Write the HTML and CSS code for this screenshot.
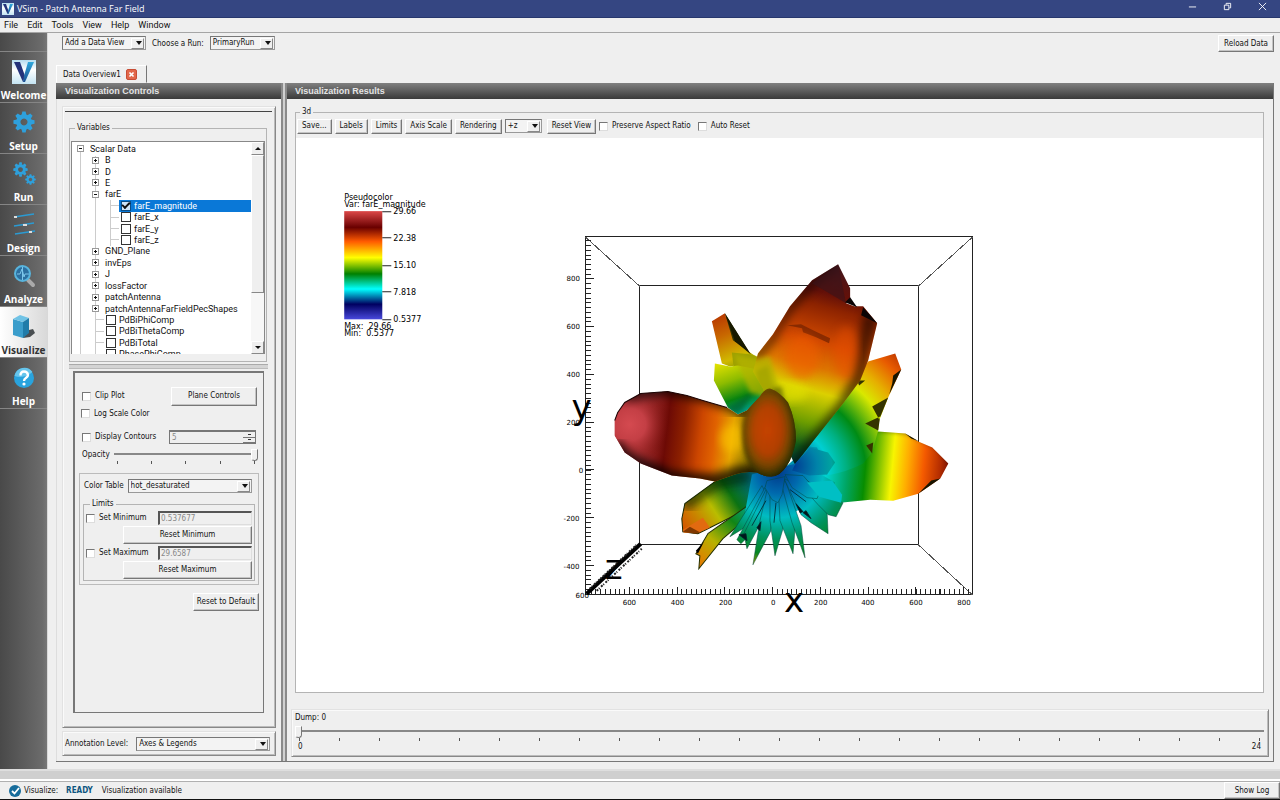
FILE: index.html
```html
<!DOCTYPE html>
<html lang="en">
<head>
<meta charset="utf-8">
<title>VSim - Patch Antenna Far Field</title>
<link rel="stylesheet" href="styles.css">
</head>
<body>
<svg width="0" height="0" class="defs" aria-hidden="true">
  <defs>
    <linearGradient id="vbg" x1="0" y1="0" x2="0" y2="1"><stop offset="0" stop-color="#b5dcef"/><stop offset=".4" stop-color="#fff"/><stop offset="1" stop-color="#c4e4f3"/></linearGradient>
    <linearGradient id="vr" x1="0" y1="0" x2="0" y2="1"><stop offset="0" stop-color="#2fa8dc"/><stop offset="1" stop-color="#1b4f93"/></linearGradient>
    <symbol id="logo" viewBox="0 0 24 24"><rect width="24" height="24" fill="url(#vbg)"/><path d="M2 2h6l5 14-2 6z" fill="#24327a"/><path d="M16 2h6l-9 20h-2l1-6z" fill="url(#vr)"/></symbol>
    <symbol id="gear" viewBox="-12 -12 24 24"><g fill="#2ea0dc"><path fill-rule="evenodd" d="M0-8.500a8.500 8.500 0 1 0 .01 0zM0-3.800a3.800 3.800 0 1 1-.01 0z"/><g><path id="tooth" d="M-2.700-7.500-1.800-11.500h3.600l.9 4zM-2.700 7.500-1.800 11.500h3.600l.9-4z"/><use href="#tooth" transform="rotate(45)"/><use href="#tooth" transform="rotate(90)"/><use href="#tooth" transform="rotate(135)"/></g></g></symbol>
  </defs>
</svg>
<div class="app">
  <header class="titlebar">
    <svg class="title-logo"><use href="#logo"/></svg>
    <h1>VSim - Patch Antenna Far Field</h1>
    <div class="winbtns">
      <button aria-label="Minimize"><svg viewBox="0 0 10 10"><path d="M1 5.500h8"/></svg></button>
      <button aria-label="Restore"><svg viewBox="0 0 10 10"><path d="M1.500 3.500h5v5h-5zM3.500 3V1.500h5v5H7"/></svg></button>
      <button aria-label="Close"><svg viewBox="0 0 10 10"><path d="M1 1l8 8M9 1l-8 8"/></svg></button>
    </div>
  </header>
  <nav class="menubar"><button>File</button><button>Edit</button><button>Tools</button><button>View</button><button>Help</button><button>Window</button></nav>

  <div class="body">
    <nav class="sidebar">
      <a href="#welcome"><svg viewBox="0 0 24 24"><use href="#logo"/></svg>Welcome</a>
      <a href="#setup"><svg viewBox="0 0 24 24"><use href="#gear" x="1" y="0" width="22" height="22"/></svg>Setup</a>
      <a href="#run"><svg viewBox="0 0 24 24"><use href="#gear" x="1" y="0" width="15" height="15"/><use href="#gear" x="13" y="12" width="11" height="11"/></svg>Run</a>
      <a href="#design"><svg viewBox="0 0 24 24"><path d="M2 4l20-3M2 13l20-3M3 21l20-3" stroke="#2b9bd3" stroke-width="1.500"/><path d="M2 4h3M11 12h4M17 19h3" stroke="#ddd" stroke-width="2"/></svg>Design</a>
      <a href="#analyze"><svg viewBox="0 0 24 24"><path d="M16 16l5 5" stroke="#aaa" stroke-width="4" stroke-linecap="round"/><circle cx="10.500" cy="9.500" r="7.500" fill="#2c6fa0" stroke="#58b4dd" stroke-width="2"/><path d="M5 10h3l2-5 2 8 1-3h4M10.500 3v13" stroke="#7cc6ea" fill="none"/></svg>Analyze</a>
      <a href="#visualize" class="active"><svg viewBox="0 0 24 24"><path d="M13 16l8-2 2 4-5 4-7 1z" fill="#4a4f52"/><path d="M1 4l10 3v16L1 20z" fill="#3b9dcb"/><path d="M1 4l7-4 9 3-6 4z" fill="#70c3e6"/><path d="M11 7l6-4v15l-6 5z" fill="#217ca9"/></svg>Visualize</a>
      <a href="#help"><svg viewBox="0 0 24 24"><circle cx="12" cy="12" r="10" fill="#29a3dd"/><path d="M2.500 10a10 10 0 0 1 18-4q-8 7-18 4z" fill="#66c5ec"/><path d="M8.500 9.500q0-4 3.500-4t4 3.500c0 3-4 2.500-4 6" fill="none" stroke="#fff" stroke-width="2.400"/><circle cx="12" cy="18" r="1.600" fill="#fff"/></svg>Help</a>
      <span class="rest"></span>
    </nav>

    <main class="main">
      <div class="toolbar">
        <span class="combo dataview"><select aria-label="Add a Data View"><option>Add a Data View</option></select></span>
        <label for="run">Choose a Run:</label>
        <span class="combo run"><select id="run"><option>PrimaryRun</option></select></span>
        <button class="btn reload">Reload Data</button>
      </div>
      <div class="tabs"><div class="tab">Data Overview1<button aria-label="Close tab"><svg viewBox="0 0 11 11"><path d="M3 3l5 5M8 3L3 8"/></svg></button></div></div>

      <div class="pane">
        <section class="controls">
          <h2>Visualization Controls</h2>
          <div class="frame control-frame">
            <hr>
            <fieldset class="variables"><legend>Variables</legend>
              <div class="tree-wrap">
                <ul class="tree">
                  <li class="l0"><i class="tg minus"></i>Scalar Data</li>
                  <li class="l1"><i class="tg"></i>B</li>
                  <li class="l1"><i class="tg"></i>D</li>
                  <li class="l1"><i class="tg"></i>E</li>
                  <li class="l1"><i class="tg minus"></i>farE</li>
                  <li class="l2 sel"><label><input type="checkbox" checked><span>farE_magnitude</span></label></li>
                  <li class="l2"><label><input type="checkbox"><span>farE_x</span></label></li>
                  <li class="l2"><label><input type="checkbox"><span>farE_y</span></label></li>
                  <li class="l2"><label><input type="checkbox"><span>farE_z</span></label></li>
                  <li class="l1"><i class="tg"></i>GND_Plane</li>
                  <li class="l1"><i class="tg"></i>invEps</li>
                  <li class="l1"><i class="tg"></i>J</li>
                  <li class="l1"><i class="tg"></i>lossFactor</li>
                  <li class="l1"><i class="tg"></i>patchAntenna</li>
                  <li class="l1"><i class="tg"></i>patchAntennaFarFieldPecShapes</li>
                  <li class="lc"><label><input type="checkbox"><span>PdBiPhiComp</span></label></li>
                  <li class="lc"><label><input type="checkbox"><span>PdBiThetaComp</span></label></li>
                  <li class="lc"><label><input type="checkbox"><span>PdBiTotal</span></label></li>
                  <li class="lc"><label><input type="checkbox"><span>PhasePhiComp</span></label></li>
                </ul>
                <div class="scroll"><button aria-label="Scroll up" class="up"></button><div class="thumb"></div><div class="trough"></div><button aria-label="Scroll down" class="down"></button></div>
              </div>
            </fieldset>
            <div class="hsplit"></div>
            <div class="plot-opts">
              <div class="row r1"><label class="chk"><input type="checkbox">Clip Plot</label><button class="btn wide">Plane Controls</button></div>
              <div class="row r2"><label class="chk"><input type="checkbox">Log Scale Color</label></div>
              <div class="row r3"><label class="chk"><input type="checkbox">Display Contours</label><span class="spin"><input type="text" value="5" aria-label="Contours" disabled><span><button aria-label="Increase" class="inc"></button><button aria-label="Decrease" class="dec"></button></span></span></div>
              <div class="row r4"><label for="op">Opacity</label><div class="slide"><input id="op" type="range" value="100"><div class="ticks"><i></i><i></i><i></i><i></i><i></i></div></div></div>
              <div class="colorbox">
                <div class="row r5"><label for="ct">Color Table</label><span class="combo"><select id="ct"><option>hot_desaturated</option></select></span></div>
                <fieldset class="limits"><legend>Limits</legend>
                  <div class="row"><label class="chk"><input type="checkbox">Set Minimum</label><input class="field" type="text" value="0.537677" aria-label="Minimum" disabled></div>
                  <button class="btn lim">Reset Minimum</button>
                  <div class="row"><label class="chk"><input type="checkbox">Set Maximum</label><input class="field" type="text" value="29.6587" aria-label="Maximum" disabled></div>
                  <button class="btn lim">Reset Maximum</button>
                </fieldset>
              </div>
              <button class="btn reset">Reset to Default</button>
            </div>
          </div>
          <div class="frame annot"><label for="an">Annotation Level:</label><span class="combo"><select id="an"><option>Axes &amp; Legends</option></select></span></div>
        </section>
        <div class="vsplit"></div>
        <section class="results">
          <h2>Visualization Results</h2>
          <fieldset class="view"><legend>3d</legend>
            <div class="viewbar">
              <button class="btn">Save...</button><button class="btn">Labels</button><button class="btn">Limits</button><button class="btn">Axis Scale</button><button class="btn">Rendering</button>
              <span class="combo axis"><select aria-label="View axis"><option>+z</option></select></span>
              <button class="btn">Reset View</button>
              <label class="chk"><input type="checkbox">Preserve Aspect Ratio</label><label class="chk"><input type="checkbox">Auto Reset</label>
            </div>
            <div class="canvas">
<svg viewBox="297 138 965 553" preserveAspectRatio="xMidYMid meet" role="img" aria-label="Far field plot">
  <defs>
    <linearGradient id="cmap" x1="0" y1="0" x2="0" y2="1"><stop offset="0" stop-color="#dc4848"/><stop offset=".15" stop-color="#690000"/><stop offset=".28" stop-color="#ff5a00"/><stop offset=".43" stop-color="#ff0"/><stop offset=".58" stop-color="#008000"/><stop offset=".72" stop-color="#0ff"/><stop offset=".86" stop-color="#000060"/><stop offset="1" stop-color="#4848dc"/></linearGradient>
    <linearGradient id="gA" gradientUnits="userSpaceOnUse" x1="620" y1="424" x2="795" y2="446"><stop offset="0" stop-color="#c04046"/><stop offset=".12" stop-color="#b93a3e"/><stop offset=".27" stop-color="#6d0a05"/><stop offset=".36" stop-color="#8c2000"/><stop offset=".46" stop-color="#cc4600"/><stop offset=".54" stop-color="#e06200"/><stop offset=".64" stop-color="#e6a400"/><stop offset=".72" stop-color="#a58400"/><stop offset=".85" stop-color="#704a00"/><stop offset="1" stop-color="#203000"/></linearGradient>
    <radialGradient id="gTip" gradientUnits="userSpaceOnUse" cx="630" cy="424" r="40"><stop offset="0" stop-color="#d44a50"/><stop offset=".4" stop-color="#c43f45"/><stop offset="1" stop-color="#6d0a05" stop-opacity="0"/></radialGradient>
    <radialGradient id="gO" gradientUnits="userSpaceOnUse" cx="768" cy="430" r="46" gradientTransform="translate(768 430) scale(.6 1) translate(-768 -430)"><stop offset="0" stop-color="#cc4200"/><stop offset=".5" stop-color="#b84000"/><stop offset=".78" stop-color="#7a4600"/><stop offset="1" stop-color="#2b3000"/></radialGradient>
    <linearGradient id="gD" gradientUnits="userSpaceOnUse" x1="842" y1="270" x2="790" y2="463"><stop offset="0" stop-color="#48151a"/><stop offset=".13" stop-color="#641008"/><stop offset=".2" stop-color="#8d2300"/><stop offset=".38" stop-color="#d34b00"/><stop offset=".5" stop-color="#dd7500"/><stop offset=".62" stop-color="#dcd000"/><stop offset=".78" stop-color="#6d9d00"/><stop offset=".9" stop-color="#135f1a"/><stop offset="1" stop-color="#003c3c"/></linearGradient>
    <linearGradient id="gB" x1="0" y1="0" x2=".35" y2="1"><stop offset="0" stop-color="#b52f00"/><stop offset=".4" stop-color="#c86800"/><stop offset=".8" stop-color="#d0b900"/><stop offset="1" stop-color="#8c9b00"/></linearGradient>
    <linearGradient id="gC" x1="0" y1="0" x2=".35" y2="1"><stop offset="0" stop-color="#e9e400"/><stop offset=".4" stop-color="#8ebc00"/><stop offset=".75" stop-color="#088510"/><stop offset="1" stop-color="#009c83"/></linearGradient>
    <radialGradient id="gE" gradientUnits="userSpaceOnUse" cx="788" cy="470" r="162"><stop offset="0" stop-color="#004a88"/><stop offset=".13" stop-color="#0074a6"/><stop offset=".25" stop-color="#00cfd2"/><stop offset=".36" stop-color="#00b080"/><stop offset=".48" stop-color="#008b14"/><stop offset=".66" stop-color="#d9e800"/><stop offset=".77" stop-color="#e6ae00"/><stop offset=".9" stop-color="#e85b00"/><stop offset="1" stop-color="#b93400"/></radialGradient>
    <linearGradient id="gF" gradientUnits="userSpaceOnUse" x1="800" y1="462" x2="948" y2="476"><stop offset="0" stop-color="#0080a0"/><stop offset=".18" stop-color="#00d4d0"/><stop offset=".32" stop-color="#00a665"/><stop offset=".44" stop-color="#078d00"/><stop offset=".62" stop-color="#f7f500"/><stop offset=".72" stop-color="#ffad00"/><stop offset=".83" stop-color="#f45a00"/><stop offset=".94" stop-color="#b42d00"/><stop offset="1" stop-color="#7b1100"/></linearGradient>
    <linearGradient id="gG" gradientUnits="userSpaceOnUse" x1="686" y1="532" x2="765" y2="480"><stop offset="0" stop-color="#d45500"/><stop offset=".2" stop-color="#c88700"/><stop offset=".38" stop-color="#b9bd00"/><stop offset=".62" stop-color="#0b7213"/><stop offset=".85" stop-color="#006d75"/><stop offset="1" stop-color="#005b8c"/></linearGradient>
    <linearGradient id="gH" gradientUnits="userSpaceOnUse" x1="698" y1="562" x2="768" y2="480"><stop offset="0" stop-color="#e37a00"/><stop offset=".25" stop-color="#b6b200"/><stop offset=".5" stop-color="#118515"/><stop offset=".75" stop-color="#00a8a3"/><stop offset="1" stop-color="#0050a2"/></linearGradient>
    <radialGradient id="gP" gradientUnits="userSpaceOnUse" cx="778" cy="472" r="94"><stop offset="0" stop-color="#003a8b"/><stop offset=".22" stop-color="#0069ad"/><stop offset=".48" stop-color="#00bcc1"/><stop offset=".7" stop-color="#00935f"/><stop offset=".88" stop-color="#078622"/><stop offset="1" stop-color="#9c9b00"/></radialGradient>
    <radialGradient id="gK" gradientUnits="userSpaceOnUse" cx="793" cy="465" r="48"><stop offset="0" stop-color="#003a92"/><stop offset=".5" stop-color="#0083a9"/><stop offset=".8" stop-color="#00a3a0"/><stop offset="1" stop-color="#009063"/></radialGradient>
    <filter id="b3" x="-20%" y="-20%" width="140%" height="140%"><feGaussianBlur stdDeviation="4"/></filter>
    <filter id="b1" x="-20%" y="-20%" width="140%" height="140%"><feGaussianBlur stdDeviation="2"/></filter>
    <path id="pA" d="M641 393L668 391 687 395 703 400 727 407 738 414 747 410 760 396Q765 388 770 388Q779 391 788 402Q796 420 796 440Q793 456 787 465Q780 476 771 476Q764 476 757 472Q745 470 735 474L715 481 700 478 672 475 641 463 625 452 615 435V420L618 412 625 402z"/>
    <clipPath id="cA"><use href="#pA"/></clipPath>
    <path id="pD" d="M838 264l12 24v10l-4 5 8 3h9l14 17-9 37-8 20-17 23-31 39-17 22-20-40-12-36-10-17 5-18 15-19 17-28 22-26z"/>
    <clipPath id="cD"><use href="#pD"/></clipPath>
    <path id="pF" d="M878 431l27 2 13 8 14 6 16 16-8 15-22 15-25 7-23-1-20 2-10 1-27-8-10-24 60-30z"/>
    <clipPath id="cF"><use href="#pF"/></clipPath>
    <path id="pG" d="M715 481L685 503 682 518 683 531 698 533 710 527 740 512 772 486 765 470 735 470z"/>
    <clipPath id="cG"><use href="#pG"/></clipPath>
  </defs>
  <g fill="none" stroke="#222" stroke-width="1" shape-rendering="crispEdges">
    <path d="M586 236.500h386v357h-386zM640 285.500h278v258h-278z"/>
    <path d="M586 237l54 49M972 237l-54 49M972 594l-54-50" stroke="#555"/>
    <path d="M588.500 240v354" stroke-width="5" stroke-dasharray="1 3.770"/>
    <path d="M590 278v300" stroke-width="8" stroke-dasharray="1 46.700"/>
    <path d="M591 591h381" stroke-width="5" stroke-dasharray="1 3.770"/>
    <path d="M629 590h340" stroke-width="8" stroke-dasharray="1 46.700"/>
  </g>
  <path d="M587 593l54-50" stroke="#000" stroke-width="4"/>
  <path d="M590 588l48-45M597 590l45-42" stroke="#222" stroke-width="2" stroke-dasharray="2 1 1 2"/>
  <g class="axis-num"><text x="567" y="281">800</text><text x="567" y="329">600</text><text x="567" y="377">400</text><text x="567" y="424">200</text><text x="579" y="472">0</text><text x="564" y="520">-200</text><text x="564" y="568">-400</text><text x="576" y="597">600</text>
  <text x="623" y="604">600</text><text x="671" y="604">400</text><text x="719" y="604">200</text><text x="771" y="604">0</text><text x="814" y="604">200</text><text x="861" y="604">400</text><text x="909" y="604">600</text><text x="957" y="604">800</text></g>
  <g class="axis-name"><text x="572" y="418">y</text><text x="784" y="611">x</text><text x="605" y="578">z</text></g>

  <path d="M725 313l25 40 7 4 10-4 18 40-28 20-20-30z" fill="#343500"/>
  <path d="M712 321l13-8 8 27 20 14 10 5-10 14-18-8-5 1-8-3z" fill="url(#gB)"/>
  <path d="M725 313l10 28 16 13z" fill="#171900"/>
  <path d="M732 352l20 2 5 3 15-1 20 65h-34l-16-22-8-30z" fill="#9da000"/>
  <path d="M715 363l15 3 8-1 20 4 8 22-19 19-9 4-10-7-14-27z" fill="url(#gC)"/>
  <path d="M755 390l-13 20-6 4-9-7z" fill="#005a2a" opacity=".6" filter="url(#b1)"/>
  <use href="#pF" fill="url(#gF)"/>
  <g clip-path="url(#cF)"><path d="M870 426l38 4 30 15 16 18" fill="none" stroke="#000" stroke-width="7" opacity=".45" filter="url(#b1)"/></g>
  <path d="M868 361l27-8 6 16-13 28-9 23-1 10-6 22-9 11q-15 8-36 12l-30-22 28-40 35-40z" fill="url(#gE)"/>
  <path d="M901 369l-8 6-1 8-3 11zM905 433l14 8-8-3zM918 493l13-13 9-2z" fill="#171500"/>
  <path d="M888 397l-16 9 7 13zM857 380h8l-6 5zM865 423l15-7-2 14zM866 445l7-3-1 11z" fill="#343300"/>
  <path d="M817 447q8 18-16 28l-16-8 23-21z" fill="#0095af"/>

  <use href="#pD" fill="url(#gD)"/>
  <g clip-path="url(#cD)">
    <path d="M870 315l-12 65-18 30-33 40-15 20" fill="none" stroke="#000" stroke-width="14" opacity=".55" filter="url(#b3)"/>
    <path d="M836 264l-25 20-22 25-17 30-18 20" fill="none" stroke="#000" stroke-width="9" opacity=".45" filter="url(#b3)"/>
    <path d="M812 283l34 20-8-38z" fill="#38141a" opacity=".6"/>
    <path d="M787 325l14-1 14 7 15 7-1 5-13-6-13-5-1-4z" fill="#7a2600" opacity=".8"/>
    <ellipse cx="802" cy="357" rx="17" ry="22" fill="#f25b00" opacity=".55" filter="url(#b3)"/>
    <ellipse cx="846" cy="352" rx="12" ry="26" fill="#e94f00" opacity=".5" filter="url(#b3)"/>
    <ellipse cx="790" cy="392" rx="18" ry="10" fill="#e5e400" opacity=".6" filter="url(#b3)"/>
    <path d="M756 370l12-5 5 20 9 2 4 22 6 8 4 18-8 10-30-40z" fill="#686c00" opacity=".75" filter="url(#b1)"/>
  </g>
  <path d="M863 307l14 16-16-8zM850 297l-5 5 12 5z" fill="#0b0505"/>
  <path d="M734 354l22 5 14-3 8 28-14 12-14-4z" fill="#b4b400" opacity=".75" filter="url(#b1)"/>

  <use href="#pG" fill="url(#gG)" stroke="#1a2800"/>
  <g clip-path="url(#cG)"><path d="M750 474l-35 7-32 23" fill="none" stroke="#001c00" stroke-width="16" opacity=".6" filter="url(#b3)"/></g>
  <path d="M683 529l20-12 7 10-12 5-14 0z" fill="#e26a10"/><path d="M683 531l7-5 11 6-6 1z" fill="#803800"/>
  <path d="M708 533l-10 17-2 3 4 2-1 13 24-30 20-17 26-31z" fill="url(#gH)" stroke="#233000"/>
  <path d="M696 550l8-9-6 12z"/>
  <path d="M752 474L800 462 835 482 828 500 805 504 792 514 780 512 770 518 757 514 745 512z" fill="url(#gP)"/>
  <g fill="url(#gP)" stroke="#00493f" stroke-width=".5">
    <path d="M762 485l-32 51 13-8 24-33z"/><path d="M766 485l-29 54 4 4 9-9 19-43z"/><path d="M768 485l-24 48 3 15 15-28 10-35z"/>
    <path d="M768 486l-8 34-7 44 18-34 2-48z"/><path d="M770 480v40l5 35 8-27-3-48z"/><path d="M778 482l2 38 13 33 2-25-10-49z"/>
    <path d="M782 486l10 36 13 35-4-32-16-46z"/><path d="M784 478l17 36 10 8 17 11-1-22-21-23z"/><path d="M800 484l18 20 10 10 8 2 7-14-9-4-30-20z"/>
    <path d="M785 474l18 1 16 18-2 5-10-1-15-10z"/><path d="M767 480l18-4-3 18-4 8-6-3-7-12z"/>
  </g>
  <path d="M807 482l25-2 10 14-1 8-22-6z" fill="#00bfc4"/>
  <path d="M796 462l14-15 18 5 7 10-8 12-18 1-17-5z" fill="url(#gK)"/>
  <path d="M796 503l4 9 3-1zM811 518l-5-8-3 2zM739 534l8 6-1-7zM757 527l4-6-1 9zM790 489l16 12M766 500l-14 25M776 502l-2 20" fill="#00171a" stroke="#00202b" stroke-width=".8"/>

  <use href="#pA" fill="url(#gA)"/>
  <g clip-path="url(#cA)">
    <path d="M612 384h60v96h-60z" fill="url(#gTip)"/>
    <path d="M625 394l43-6 35 7 26 8 13 8 15-15" fill="none" stroke="#000" stroke-width="14" opacity=".65" filter="url(#b3)"/>
    <path d="M612 446l12 14 46 20 45 3 25-8 50-4" fill="none" stroke="#000" stroke-width="20" opacity=".75" filter="url(#b3)"/>
    <ellipse cx="733" cy="438" rx="13" ry="14" fill="#ffc800" opacity=".6" filter="url(#b3)"/>
    <ellipse cx="769" cy="433" rx="27" ry="45" fill="url(#gO)" opacity=".93" filter="url(#b1)"/>
  </g>
  <path d="M615 420l3-8 7-10 16-9 27-2 19 4 16 5 24 7" fill="none" stroke="#1c0505"/>

  <rect x="345" y="211" width="38" height="108" fill="url(#cmap)"/>
  <path d="M383 211.500h9M383 237.500h9M383 265.500h9M383 291.500h9M383 319.500h9" stroke="#222"/>
  <g class="legend"><text x="345" y="200">Pseudocolor</text><text x="345" y="207">Var: farE_magnitude</text><text x="394" y="214">29.66</text><text x="394" y="241">22.38</text><text x="394" y="268">15.10</text><text x="394" y="295">7.818</text><text x="394" y="322">0.5377</text><text x="345" y="329">Max:&#160; 29.66</text><text x="345" y="336">Min:&#160; 0.5377</text></g>
</svg>
            </div>
          </fieldset>
          <div class="frame dump"><label for="dump">Dump: 0</label>
            <input id="dump" type="range" min="0" max="24" value="0">
            <div class="ticks"><i></i><i></i><i></i><i></i><i></i><i></i><i></i><i></i><i></i><i></i><i></i><i></i><i></i><i></i><i></i><i></i><i></i><i></i><i></i><i></i><i></i><i></i><i></i><i></i><i></i></div>
            <div class="ends"><span>0</span><span>24</span></div>
          </div>
        </section>
      </div>
    </main>
  </div>
  <div class="band"></div>
  <footer class="status"><svg viewBox="0 0 12 12"><circle cx="6" cy="6" r="6" fill="#176c9b"/><path d="M3 6l2.500 2.500L10 3" fill="none" stroke="#fff" stroke-width="1.800"/></svg><span>Visualize:</span><b>READY</b><span>Visualization available</span><button class="btn">Show Log</button></footer>
</div>
</body>
</html>
```
FILE: styles.css
```css
* { box-sizing: border-box; }
body { margin: 0; background: #efefef; color: #111; font: 8px/12px "DejaVu Sans Condensed", "DejaVu Sans", sans-serif; }
.defs { position: absolute; }
button, input, select { font: inherit; color: inherit; margin: 0; padding: 0; border: 0; border-radius: 0; background: none; }
fieldset { margin: 0; padding: 0; border: 1px solid #b4b4b4; min-width: 0; }
legend { margin-left: 4px; padding: 0 2px; line-height: 10px; }
.app { display: flex; flex-direction: column; height: 100vh; overflow: hidden; }

.titlebar { display: flex; align-items: center; height: 18px; padding-left: 2px; flex: none; background: #354682; border-bottom: 1px solid #27376d; color: #fff; }
.title-logo { width: 12px; height: 12px; }
.titlebar h1 { margin: 0 0 0 3px; font: 9px/14px "Open Sans", "Noto Sans", sans-serif; }
.winbtns { display: flex; margin-left: auto; }
.winbtns button { width: 35px; height: 16px; }
.winbtns svg { width: 9px; height: 9px; fill: none; stroke: #fff; }
.menubar { display: flex; flex: none; gap: 9px; height: 15px; padding: 0 4px; border-bottom: 1px solid #a5a5a5; font: 9px/14px Roboto, sans-serif; }

.body { display: flex; flex: 1; min-height: 0; }
.sidebar { width: 48px; flex: none; padding-top: 18px; background: linear-gradient(90deg, #494949, #6b6b6b 90%, #777); border-right: 1px solid #d8d8d8; }
.sidebar a { display: flex; flex-direction: column; align-items: center; height: 51px; padding-top: 8px; gap: 5px; border-top: 1px solid #858585; color: #fff; font: bold 10px/12px "Open Sans", "Noto Sans", sans-serif; text-decoration: none; }
.sidebar svg { width: 24px; height: 24px; flex: none; }
.sidebar a.active { color: #333; background: linear-gradient(90deg, #fff, #d9d9d9); }
.rest { display: block; border-top: 1px solid #858585; }
.main { flex: 1; min-width: 0; display: flex; flex-direction: column; padding: 0 6px 7px 8px; }

.btn { height: 15px; padding: 0 4px; background: #efefef; border: 1px solid; border-color: #fff #777 #777 #fff; box-shadow: inset -1px -1px #c4c4c4; line-height: 12px; white-space: nowrap; }
.combo { position: relative; display: inline-flex; height: 14px; border: 1px solid; border-color: #777 #999 #999 #777; background: #f3f3f3; }
.combo select { width: 100%; appearance: none; padding-left: 2px; line-height: 12px; }
.combo::before { content: ""; position: absolute; right: 1px; top: 1px; bottom: 0; width: 11px; border: 1px solid; border-color: #fff #888 #888 #fff; background: #efefef; pointer-events: none; }
.combo::after { content: ""; position: absolute; right: 3px; top: 4px; border: 3px solid transparent; border-top: 4px solid #111; border-bottom: 0; pointer-events: none; }
.chk { display: inline-flex; align-items: center; gap: 4px; white-space: nowrap; }
input[type=checkbox] { appearance: none; width: 9px; height: 9px; flex: none; background: #fff; border: 1px solid; border-color: #777 #ddd #ddd #777; }
input[type=range] { appearance: none; display: block; width: 100%; height: 12px; background: linear-gradient(#888, #888) 0 4px / 100% 2px no-repeat; }
input[type=range]::-webkit-slider-thumb { appearance: none; width: 7px; height: 12px; border-radius: 0 0 4px 4px; border: 1px solid; border-color: #fff #777 #777 #fff; background: #efefef; }
.ticks { display: flex; justify-content: space-between; }
.ticks i { width: 1px; height: 3px; background: #555; }
.frame { border: 1px solid; border-color: #e2e2e2 #888 #888 #e2e2e2; box-shadow: inset 1px 1px #fafafa, inset -1px -1px #bbb; }

.toolbar { display: flex; flex: none; align-items: flex-start; height: 32px; padding: 3px 0 0 6px; gap: 6px; }
.toolbar label { line-height: 15px; }
.toolbar .dataview { width: 84px; }
.toolbar .run { width: 65px; }
.reload { margin-left: auto; margin-top: -1px; height: 17px; padding: 0 5px; }
.tabs { display: flex; flex: none; height: 18px; }
.tab { display: flex; align-items: center; gap: 5px; width: 91px; padding: 1px 0 0 6px; border: 1px solid; border-color: #fff #777 transparent #fff; white-space: nowrap; }
.tab button { width: 11px; height: 11px; background: #e2674a; border: 1px solid #c84d35; border-radius: 2px; display: flex; }
.tab svg { width: 9px; height: 9px; stroke: #fff; stroke-width: 2; }
.pane { display: flex; flex: 1; min-height: 0; border-right: 1px solid #777; border-bottom: 1px solid #777; }
h2 { margin: 0; height: 16px; flex: none; padding-left: 9px; background: linear-gradient(#808080, #3a3a3a); color: #e4e4e4; font: bold 9px/16px "Liberation Sans", Arial, sans-serif; }
.controls { width: 225px; flex: none; display: flex; flex-direction: column; border-left: 1px solid #ddd; }
.controls h2 { margin-left: -1px; }
.vsplit { width: 6px; flex: none; background: #d0d0d0; border-left: 2px solid #8a8a8a; border-right: 2px solid #8a8a8a; }
.results { flex: 1; min-width: 0; display: flex; flex-direction: column; padding-bottom: 4px; }
.results h2 { padding-left: 8px; }

.control-frame { flex: 1; min-height: 0; display: flex; flex-direction: column; margin: 7px 5px 0 5px; padding: 0 3px 14px 2px; }
hr { width: 100%; height: 1px; margin: 4px 0 0; border: 0; background: #444; flex: none; }
.variables { flex: none; margin: 11px 5px 0 4px; padding: 8px 1px 7px; }
.tree-wrap { display: flex; height: 213px; overflow: hidden; border: 1px solid #888; border-bottom: 0; background: #fff; }
.tree { flex: 1; min-width: 0; height: 218px; margin: 0; padding: 1px 0 0; list-style: none; display: grid; grid-auto-rows: 1fr; font: 9px/10px Roboto, sans-serif; background: linear-gradient(#ccc, #ccc) 8px 10px / 1px 100% no-repeat, linear-gradient(#ccc, #ccc) 23px 14px / 1px 100% no-repeat; }
.tree li { display: flex; align-items: center; min-height: 0; line-height: 10px; white-space: nowrap; }
.tree label { display: flex; align-items: center; gap: 3px; flex: 1; height: 100%; }
.tree input { width: 10px; height: 10px; border: 1px solid #333; }
.l0 { padding-left: 5px; }
.l1 { padding-left: 20px; }
.l2 { padding-left: 49px; background: linear-gradient(#ccc, #ccc) 38px 5px / 9px 1px no-repeat, linear-gradient(#ccc, #ccc) 38px 0 / 1px 100% no-repeat; }
.lc { padding-left: 34px; background: linear-gradient(#ccc, #ccc) 24px 5px / 8px 1px no-repeat; }
.tree .sel label { background: #0a78d7; color: #fff; padding-left: 2px; }
.tree .sel { padding-left: 47px; }
.tree .sel input { display: grid; place-items: center; background: #cfe5f8; border-color: #0a4d86; }
.tree .sel input::before { content: ""; width: 6px; height: 3px; margin-top: -2px; border-left: 2px solid #111; border-bottom: 2px solid #111; transform: rotate(-45deg); }
.tg { position: relative; width: 7px; height: 7px; margin-right: 6px; flex: none; border: 1px solid #999; background: #fff; }
.tg::before { content: ""; position: absolute; left: 1px; top: 2px; width: 3px; height: 1px; background: #111; }
.tg::after { content: ""; position: absolute; left: 2px; top: 1px; width: 1px; height: 3px; background: #111; }
.minus::after { display: none; }
.scroll { width: 13px; display: flex; flex-direction: column; background: #f7f7f7; }
.scroll button, .thumb { border: 1px solid; border-color: #fff #888 #888 #fff; background: #efefef; }
.scroll button { height: 13px; flex: none; display: grid; place-items: center; }
.thumb { height: 138px; }
.trough { flex: 1; }
.up::before { content: ""; border: 3px solid transparent; border-top: 0; border-bottom: 3px solid #111; }
.down::before { content: ""; border: 3px solid transparent; border-bottom: 0; border-top: 3px solid #111; }
.hsplit { height: 5px; flex: none; margin: 2px 4px 0; background: #d4d4d4; border-top: 1px solid #aaa; border-bottom: 1px solid #bbb; }
.plot-opts { flex: 1; min-height: 0; display: flex; flex-direction: column; margin: 2px 8px 0 8px; border: 1px solid #777; border-top-width: 2px; border-left-width: 2px; }
.row { display: flex; align-items: center; }
.r1 { margin-top: 13px; padding: 0 6px 0 7px; height: 20px; justify-content: space-between; }
.wide { width: 86px; height: 19px; }
.r2 { height: 15px; padding-left: 6px; }
.r3 { height: 16px; margin-top: 8px; padding: 0 7px; justify-content: space-between; }
.spin { display: flex; width: 87px; height: 14px; border: 1px solid #777; border-top-width: 2px; }
.spin input { flex: 1; min-width: 0; padding-left: 2px; color: #888; }
.spin > span { display: flex; flex-direction: column; width: 12px; }
.spin button { flex: 1; min-height: 0; border-bottom: 1px solid #777; display: grid; place-items: center; }
.spin button::before { content: ""; width: 3px; height: 1px; background: #333; }
.r4 { align-items: flex-start; gap: 4px; padding: 4px 5px 0 7px; height: 25px; }
.r4 .slide { flex: 1; min-width: 0; }
.r4 .ticks { padding: 0 3px; }
.colorbox { margin: 3px 4px 0; border: 1px solid #bbb; padding: 5px 3px 3px; }
.r5 { gap: 4px; padding: 0 3px 0 1px; }
.r5 .combo { flex: 1; }
.limits { margin-top: 6px; padding: 0 2px 1px 2px; }
.limits .row { justify-content: space-between; height: 16px; margin-top: 1px; }
.field { width: 94px; height: 14px; padding-left: 1px; border: 1px solid #ddd; border-top: 2px solid #555; border-left: 2px solid #555; color: #888; }
.lim { display: block; width: 129px; height: 18px; margin-left: auto; }
.reset { align-self: flex-end; height: 18px; margin: 8px 4px 0 0; padding: 0 3px; }
.annot { flex: none; display: flex; align-items: center; gap: 8px; height: 25px; margin: 3px 5px 5px; padding: 0 5px 0 2px; }
.annot .combo { flex: 1; }

.view { flex: 1; min-height: 0; margin: 8px 9px 0 8px; display: flex; flex-direction: column; }
.viewbar { display: flex; flex: none; align-items: center; gap: 3px; height: 21px; padding: 0 0 3px 1px; }
.viewbar .axis { width: 37px; margin-right: 2px; }
.viewbar .chk + .chk { margin-left: 4px; }
.canvas { flex: 1; min-height: 0; background: #fff; }
.canvas svg { display: block; width: 100%; height: 100%; }
.axis-num { font: 7px "DejaVu Sans", sans-serif; }
.axis-name { font: 34px "DejaVu Sans", sans-serif; }
.legend { font: 8px "DejaVu Sans", sans-serif; }
.dump { flex: none; height: 48px; margin: 16px 4px 0; padding: 2px 4px 0 3px; }
.dump input { margin-top: 2px; }
.dump .ticks { padding: 0 4px; }
.ends { display: flex; justify-content: space-between; padding: 0 3px; }

.band { flex: none; height: 12px; background: #cfcfcf; border-top: 2px solid #dedede; border-bottom: 2px solid #fff; }
.status { display: flex; flex: none; align-items: center; height: 19px; padding-left: 9px; border-top: 1px solid #b0b0b0; border-bottom: 1px solid #111; }
.status svg { width: 12px; height: 12px; margin-right: 3px; }
.status b { margin: 0 9px 0 8px; color: #0d5680; }
.status .btn { width: 56px; height: 17px; margin-left: auto; }
```
